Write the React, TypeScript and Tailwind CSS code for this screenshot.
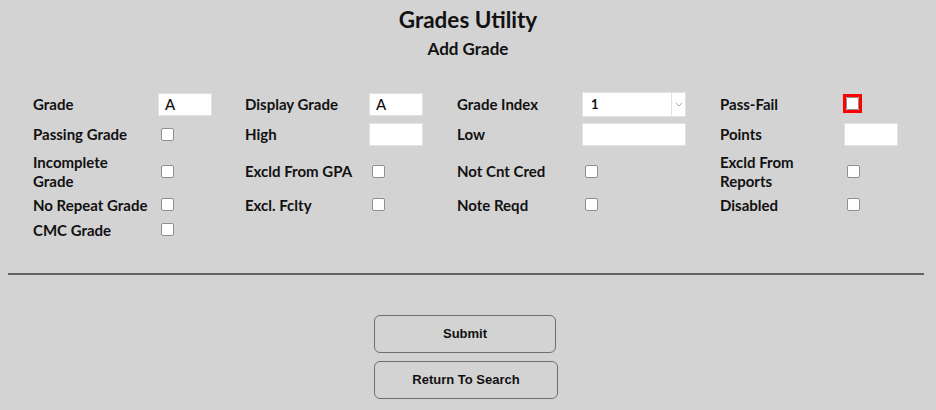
import React from 'react'

const font = "font-['Lato','Noto_Sans',sans-serif]"

const Box = ({ red }: { red?: boolean }) => (
    <span className={`inline-flex items-center justify-center ${red ? 'border-[3px] border-[#ff0000] ml-[-1px]' : 'ml-[3px]'}`}>
        <span className="block w-[13px] h-[13px] rounded-[2px] border border-[#8f8f8f] bg-white"></span>
    </span>
)

const Text = ({ value, w }: { value?: string; w: string }) => (
    <div className={`${w} h-[23px] bg-white border border-[#e2e2e2] flex items-center pl-[6px] text-[15px] font-medium text-[#111]`}>
        {value}
    </div>
)

const Label = ({ children }: { children: React.ReactNode }) => (
    <div className="text-[15px] font-bold leading-[19px] text-[#111] pr-1 whitespace-nowrap">{children}</div>
)

const App = () => {
    return (
        <div className={`w-[936px] h-[410px] bg-[#d3d3d3] overflow-hidden ${font}`}>
            <div className="flex flex-col items-center pt-[6px]">
                <h1 className="text-[22.5px] font-bold leading-[27px] text-[#111]">Grades Utility</h1>
                <h2 className="text-[17px] font-bold leading-[20px] mt-[6px] text-[#111]">Add Grade</h2>
            </div>

            <div className="mt-[31px] pl-[33px] grid grid-cols-[125px_87px_124px_88px_125px_138px_124px_1fr] grid-rows-[28px_33px_41px_26px_24px] items-center">
                {/* row 1 */}
                <Label>Grade</Label>
                <Text value="A" w="w-[54px]" />
                <Label>Display Grade</Label>
                <Text value="A" w="w-[54px]" />
                <Label>Grade Index</Label>
                <div className="w-[104px] h-[25px] bg-white border border-[#e2e2e2] flex items-center">
                    <span className="flex-1 pl-[8px] text-[13px] font-bold text-[#111] pt-[2px]">1</span>
                    <span className="w-[14px] h-full border-l border-[#e2e2e2] flex items-center justify-center">
                        <svg width="8" height="5" viewBox="0 0 8 5" fill="none">
                            <path d="M1 1l3 3 3-3" stroke="#a8a8a8" strokeWidth="1" />
                        </svg>
                    </span>
                </div>
                <Label>Pass-Fail</Label>
                <div><Box red /></div>

                {/* row 2 */}
                <Label>Passing Grade</Label>
                <div><Box /></div>
                <Label>High</Label>
                <Text w="w-[54px]" />
                <Label>Low</Label>
                <Text w="w-[104px]" />
                <Label>Points</Label>
                <Text w="w-[54px]" />

                {/* row 3 */}
                <Label>Incomplete<br />Grade</Label>
                <div><Box /></div>
                <Label>Excld From GPA</Label>
                <div><Box /></div>
                <Label>Not Cnt Cred</Label>
                <div><Box /></div>
                <Label>Excld From<br />Reports</Label>
                <div><Box /></div>

                {/* row 4 */}
                <Label>No Repeat Grade</Label>
                <div><Box /></div>
                <Label>Excl. Fclty</Label>
                <div><Box /></div>
                <Label>Note Reqd</Label>
                <div><Box /></div>
                <Label>Disabled</Label>
                <div><Box /></div>

                {/* row 5 */}
                <Label>CMC Grade</Label>
                <div><Box /></div>
            </div>

            <div className="ml-2 mr-3 mt-[31px]">
                <div className="h-[2px] bg-[#626262]"></div>
                <div className="flex flex-col items-center gap-[8px] pt-[40px] pr-[2px] font-['Liberation_Sans',Arial,sans-serif]">
                    <button className="w-[182px] h-[38px] rounded-[6px] border border-[#6e6e6e] text-[13px] font-bold text-[#111]">
                        Submit
                    </button>
                    <button className="w-[184px] h-[38px] ml-[2px] rounded-[6px] border border-[#6e6e6e] text-[13px] font-bold text-[#111]">
                        Return To Search
                    </button>
                </div>
            </div>
        </div>
    )
}

export default App
